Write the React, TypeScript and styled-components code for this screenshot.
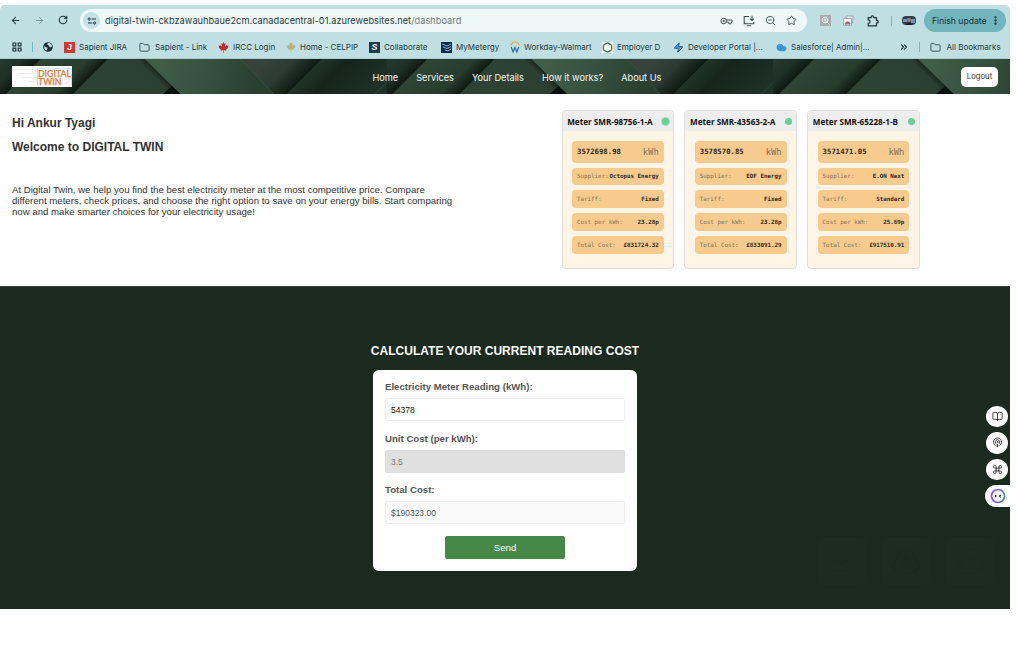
import React from 'react';
import styled, { createGlobalStyle } from 'styled-components';
import {
  ArrowLeft, ArrowRight, RotateCw, ZoomOut, Star, EllipsisVertical,
  ChevronsRight, Folder, BookOpen, Podcast, Command, Zap, Hexagon, Cloud,
} from 'lucide-react';
import { FaCanadianMapleLeaf } from 'react-icons/fa';

const ui = `Inter, 'Liberation Sans', sans-serif`;
const arial = `'Liberation Sans', Arial, sans-serif`;

const GlobalStyle = createGlobalStyle`
  * { box-sizing: border-box; }
  body { margin: 0; background: #fff; font-family: ${arial}; overflow: hidden; }
  svg { display: block; flex: none; overflow: visible; }
`;

const Page = styled.div`
  position: relative;
  width: 1010px;
  padding-top: 5px;
`;

/* ---------- browser chrome ---------- */
const Chrome = styled.header`
  height: 54px;
  background: #bfdfe3;
  border-bottom: 1px solid #a9cdd2;
  border-radius: 5px 5px 0 0;
  font-family: ${ui};
  color: #23393d;
`;
const Toolbar = styled.div`
  display: flex;
  align-items: center;
  height: 31px;
  padding: 0 4px 0 9px;
`;
const NavButtons = styled.div`
  display: flex;
  gap: 13px;
  width: 71px;
  padding-left: 0.7px;
`;
const AddressBar = styled.div`
  display: flex;
  align-items: center;
  width: 727px;
  height: 23px;
  padding: 0 10px 0 3px;
  border-radius: 12px;
  background: #eff8f8;
`;
const SiteBadge = styled.span`
  display: grid;
  place-items: center;
  width: 17px;
  height: 17px;
  margin-right: 5px;
  border-radius: 50%;
  background: #c4e1e5;
`;
const Url = styled.span`
  flex: 1;
  font-size: 9.2px;
  letter-spacing: 0.05px;
  white-space: nowrap;
  color: #26383b;
  span { color: #6a7d80; }
`;
const AddressIcons = styled.div`
  display: flex;
  align-items: center;
  gap: 10px;
  color: #3f5154;
`;
const Extensions = styled.div`
  display: flex;
  align-items: center;
  gap: 12.5px;
  width: 117px;
  padding-left: 12.5px;
`;
const Divider = styled.i<{ $gap?: string }>`
  width: 1px;
  height: 10px;
  margin: ${p => p.$gap || '0'};
  background: #6dbac4;
`;
const UpdateButton = styled.div`
  display: flex;
  align-items: center;
  justify-content: space-between;
  width: 82px;
  height: 23px;
  padding: 0 5px 0 8px;
  border-radius: 12px;
  background: #73b5bd;
  font-size: 8.6px;
  white-space: nowrap;
  color: #173034;
`;
const Bookmarks = styled.div`
  display: flex;
  align-items: center;
  height: 22px;
  padding-left: 12px;
  font-size: 8px;
`;
const Bookmark = styled.div<{ $width: number; $gap?: number }>`
  display: flex;
  align-items: center;
  gap: ${p => p.$gap ?? 4}px;
  width: ${p => p.$width}px;
  white-space: nowrap;
`;
const Favicon = styled.span<{ $bg: string }>`
  display: grid;
  place-items: center;
  width: 11px;
  height: 11px;
  background: ${p => p.$bg};
  color: #fff;
  font: bold 9px/11px ${arial};
`;

/* ---------- site navigation ---------- */
const SiteNav = styled.nav`
  display: grid;
  grid-template: 35px / 1fr;
  background: #26382c;
  > * { grid-area: 1 / 1; }
`;
const Backdrop = styled.svg`
  clip-path: inset(0);
`;
const NavContent = styled.div`
  z-index: 1;
  display: grid;
  grid-template-columns: 60px 1fr 37px;
  align-items: center;
  padding: 0 12px;
`;
const Links = styled.div`
  display: flex;
  justify-content: space-between;
  width: 289px;
  margin-left: 300.4px;
  padding-top: 1px;
  font: 9.2px ${ui};
  white-space: nowrap;
  color: #f5f7f5;
`;
const Logout = styled.button`
  height: 20px;
  padding: 0;
  border: 0;
  border-radius: 5px;
  background: #fff;
  color: #333;
  font: 7.7px ${ui};
`;

/* ---------- welcome ---------- */
const Welcome = styled.section`
  display: flex;
  justify-content: space-between;
  height: 192px;
  padding: 16px 90px 0 12px;
`;
const Intro = styled.div`
  width: 450px;
  color: #333;
`;
const Greeting = styled.h2`
  margin: 0;
  padding-top: 5px;
  font-size: 12px;
  line-height: 16px;
  & + & { padding-top: 8px; }
`;
const Lead = styled.p`
  margin: 29px 0 0;
  font-size: 9.63px;
  line-height: 11.2px;
  white-space: nowrap;
`;
const Meters = styled.div`
  display: flex;
  gap: 10px;
`;
const MeterCard = styled.article`
  width: 112.8px;
  height: 159px;
  border: 1px solid #e2e0dd;
  border-radius: 4px;
  overflow: hidden;
  background: #fef5e7;
`;
const MeterHead = styled.div`
  display: flex;
  align-items: center;
  justify-content: space-between;
  height: 20px;
  padding: 0 4px 0 4.6px;
  background: #eeeeef;
  font: bold 8.15px 'Noto Sans', sans-serif;
  white-space: nowrap;
  color: #111;
`;
const Status = styled.i<{ $halo?: boolean }>`
  width: 7px;
  height: 7px;
  border-radius: 50%;
  background: #68cf9b;
  box-shadow: ${p => (p.$halo ? '0 0 0 1px #a4dfc1' : 'none')};
`;
const MeterBody = styled.div`
  display: flex;
  flex-direction: column;
  gap: 5px;
  padding: 10px 9.7px 0 9.4px;
`;
const MeterRow = styled.div<{ $big?: boolean }>`
  display: flex;
  align-items: center;
  justify-content: space-between;
  height: ${p => (p.$big ? 21.5 : 17.8)}px;
  padding: 0 5px;
  border-radius: 4px;
  background: #f6cb8d;
  font-family: 'DejaVu Sans Mono', monospace;
  font-size: ${p => (p.$big ? 7.3 : 5.85)}px;
  white-space: nowrap;
  color: #817259;
  b { color: #30281b; }
`;
const Unit = styled.span`
  font-size: 8.8px;
`;

/* ---------- calculator ---------- */
const Calculator = styled.main`
  display: flex;
  flex-direction: column;
  align-items: center;
  height: 323px;
  padding-top: 57px;
  border-top: 1px solid #35443a;
  background: #1b2a1e;
`;
const Title = styled.h1`
  margin: 0 0 11px;
  font-size: 12px;
  line-height: 15px;
  letter-spacing: 0.02px;
  white-space: nowrap;
  color: #fff;
`;
const Form = styled.form`
  display: flex;
  flex-direction: column;
  width: 264px;
  height: 201px;
  padding: 11px 12px;
  border-radius: 6px;
  background: #fff;
`;
const Label = styled.label`
  margin-bottom: 5px;
  font-size: 9.65px;
  font-weight: bold;
  line-height: 12px;
  color: #555;
`;
const Field = styled.div<{ $bg: string; $border: string; $color: string }>`
  height: 23px;
  margin-bottom: 11.5px;
  padding: 0 5px;
  border: 1px solid ${p => p.$border};
  border-radius: 2px;
  background: ${p => p.$bg};
  color: ${p => p.$color};
  font-size: 8.5px;
  line-height: 22px;
`;
const Send = styled.button`
  align-self: center;
  width: 120px;
  height: 23px;
  padding: 0;
  border: 0;
  border-radius: 2px;
  background: #468847;
  color: #fff;
  font: 9.7px ${arial};
`;

/* ---------- floating overlays ---------- */
const SideDock = styled.div`
  position: absolute;
  right: 0;
  top: 405.5px;
  display: flex;
  flex-direction: column;
  align-items: flex-end;
  gap: 5px;
`;
const DockButton = styled.div<{ $tab?: boolean }>`
  display: grid;
  place-items: center;
  width: ${p => (p.$tab ? 25 : 22)}px;
  height: ${p => (p.$tab ? 22 : 21.5)}px;
  margin-right: ${p => (p.$tab ? 0 : 2)}px;
  border-radius: ${p => (p.$tab ? '11px 0 0 11px' : '50%')};
  background: #fff;
  color: #333;
`;
const Ghosts = styled.div`
  position: absolute;
  top: 537px;
  left: 818px;
  display: flex;
  gap: 16px;
`;
const Ghost = styled.div`
  display: grid;
  place-items: center;
  width: 48px;
  height: 48px;
  border-radius: 6px;
  background: #1d2c20;
  color: #1c2b1f;
`;

const TILE = 386.6;

function NavBackdrop() {
  return (
    <Backdrop width="1010" height="35">
      <defs>
        <linearGradient id="band" gradientUnits="userSpaceOnUse" x1="20.5" y1="20.5" x2="54" y2="54">
          <stop offset="0" stopColor="#2f4435" /><stop offset=".7" stopColor="#293d2e" /><stop offset="1" stopColor="#0d1a11" />
        </linearGradient>
        <linearGradient id="wedge" gradientUnits="userSpaceOnUse" x1="95" y1="20" x2="130" y2="-15">
          <stop offset="0" stopColor="#2d4232" /><stop offset=".88" stopColor="#2b4030" /><stop offset="1" stopColor="#18281c" />
        </linearGradient>
        <linearGradient id="panel" gradientUnits="userSpaceOnUse" x1="160" y1="5" x2="255" y2="30">
          <stop offset="0" stopColor="#405d48" /><stop offset=".6" stopColor="#344e3b" /><stop offset="1" stopColor="#293f2f" />
        </linearGradient>
        <linearGradient id="fold" gradientUnits="userSpaceOnUse" x1="135" y1="135" x2="161" y2="161">
          <stop offset="0" stopColor="#35433b" /><stop offset=".5" stopColor="#2b3b31" /><stop offset="1" stopColor="#0d1a11" />
        </linearGradient>
        <linearGradient id="night" gradientUnits="userSpaceOnUse" x1="161" y1="161" x2="205" y2="205">
          <stop offset="0" stopColor="#213427" /><stop offset=".3" stopColor="#15251a" /><stop offset="1" stopColor="#1f3228" />
        </linearGradient>
        <linearGradient id="dusk" gradientUnits="userSpaceOnUse" x1="2" y1="2" x2="20.5" y2="20.5">
          <stop offset="0" stopColor="#25382e" /><stop offset=".5" stopColor="#203228" /><stop offset="1" stopColor="#0d1a11" />
        </linearGradient>
        <g id="tile">
          <path d="M0 0H41L6 35H0Z" fill="url(#dusk)" />
          <path d="M41 0H108L73 35H6Z" fill="url(#band)" />
          <path d="M108 0H145L180 35H73Z" fill="url(#wedge)" />
          <path d="M172 27L163 35H181Z" fill="#08120c" />
          <path d="M145 0H240L274 35H181Z" fill="url(#panel)" />
          <path d="M240 0H322L287 35H274Z" fill="url(#fold)" />
          <path d="M322 0H387V35H287Z" fill="url(#night)" />
          <path d="M145 0L181 35M240 0L274 35M387 23L375 35" stroke="#587060" strokeWidth=".5" opacity=".6" fill="none" />
        </g>
      </defs>
      {[0, 1, 2].map(i => <use key={i} href="#tile" x={i * TILE} />)}
    </Backdrop>
  );
}

function Logo() {
  return (
    <svg width="60" height="21" viewBox="0 0 60 21">
      <rect width="60" height="21" fill="#fff" />
      <path d="M1 3.5H19Q25 3.5 25 8M5 7.5H25M10 11.5H25M16 15.5H25M25 18H54L59 11" stroke="#ececee" strokeWidth="1.2" fill="none" />
      <path d="M25.5 20V2.5H59.5V20" stroke="#b9c9e3" strokeWidth=".6" fill="none" />
      <g fill="#dc8148" stroke="#dc8148" strokeWidth=".25" fontFamily="Lato, sans-serif" fontWeight="600" fontSize="9.6">
        <text x="26" y="10.6" textLength="33" lengthAdjust="spacingAndGlyphs">DIGITAL</text>
        <text x="26" y="18.5" textLength="23.5" lengthAdjust="spacingAndGlyphs">TWIN</text>
      </g>
    </svg>
  );
}

const TuneIcon = () => (
  <svg width="10" height="10" viewBox="0 0 10 10" fill="none" stroke="#23393d" strokeWidth="1">
    <circle cx="2.2" cy="3" r="1.1" /><path d="M4.5 3H9M1 7H5.3" /><circle cx="7.6" cy="7" r="1.1" />
  </svg>
);
const KeyIcon = () => (
  <svg width="13" height="10" viewBox="0 0 13 10" fill="none" stroke="currentColor" strokeWidth="1">
    <circle cx="3.7" cy="5" r="2.8" /><circle cx="3.7" cy="5" r=".7" fill="currentColor" /><path d="M6.3 4H12V6.3H11V7.8H8.8V6.2H6.3" />
  </svg>
);
const InstallIcon = () => (
  <svg width="12" height="12" viewBox="0 0 12 12" fill="none" stroke="currentColor" strokeWidth="1.1">
    <path d="M6 1.5H1.2V8.8H10.8V7M3.8 10.7H8.2M9 .8V5.2M7 3.6L9 5.5L11 3.6" />
  </svg>
);
const AppsIcon = () => (
  <svg width="10" height="10" viewBox="0 0 10 10" fill="none" stroke="#23393d" strokeWidth="1.2">
    <path d="M1 1H3.8V3.8H1ZM6.2 1H9V3.8H6.2ZM1 6.2H3.8V9H1ZM6.2 6.2H9V9H6.2Z" />
  </svg>
);
const GlobeIcon = () => (
  <svg width="10" height="10" viewBox="0 0 10 10">
    <circle cx="5" cy="5" r="4.8" fill="#1f2f33" />
    <path d="M1 4L3 5.2L4.5 5.4L4.3 7L3.2 8.7Q1 7.5 1 4M5 1L4 2.4L6 3.5L5.7 4.6L8 5.5L9 4Q8.6 1.7 6.6 1" fill="#bfdfe3" />
  </svg>
);
const LensBox = () => (
  <svg width="11" height="11" viewBox="0 0 11 11" fill="none" stroke="#f4f4f4" strokeWidth="1">
    <rect width="11" height="11" fill="#a9adae" stroke="none" /><circle cx="5" cy="5" r="2.8" /><path d="M7 7L9.5 9.5M3.7 5H6.3M5 3.7V6.3" />
  </svg>
);
const CardsIcon = () => (
  <svg width="11" height="11" viewBox="0 0 11 11">
    <path d="M3 1H10.4L9.6 8H3Z" fill="#e8eeee" stroke="#889598" strokeWidth=".8" />
    <path d="M.6 3.5H8.5V10.3H.6Z" fill="#f8fafa" stroke="#889598" strokeWidth=".8" />
    <path d="M2.4 9.4A2.2 2.2 0 0 1 6.8 9.4" fill="#4a86e8" stroke="#db5145" strokeWidth="1.2" />
  </svg>
);
const PuzzleIcon = () => (
  <svg width="12" height="12" viewBox="0 0 12 12" fill="none" stroke="#1f3235" strokeWidth="1.2">
    <path d="M1.2 2.6H4Q4 .9 5.4 .9T6.8 2.6H9.5V5.3Q11.3 5.3 11.3 6.7T9.5 8.1V10.8H1.2V8.5Q3.1 8.2 3.1 6.7T1.2 4.9Z" />
  </svg>
);
const Avatar = styled.svg`
  margin-left: -2.5px;
`;
const AvatarIcon = () => (
  <Avatar width="14" height="11" viewBox="0 0 14 11">
    <rect y="1" width="14" height="9" rx="4" fill="#36404d" /><path d="M1 4H5V7H1M9 4H13V8H9" fill="#7392b8" />
    <circle cx="7" cy="5" r="2" fill="#a28370" /><path d="M4 10Q7 5.5 10 10" fill="#17191d" />
  </Avatar>
);
const MetergyIcon = () => (
  <svg width="11" height="11" viewBox="0 0 11 11">
    <rect width="11" height="11" fill="#102c4d" />
    <path d="M1 2L6 4L10 2M2 5L6 6.5L10 4.5M4 8L7 9L10 7" stroke="#8fc0dd" strokeWidth=".9" fill="none" />
  </svg>
);
const WorkdayIcon = () => (
  <svg width="10" height="12" viewBox="0 0 10 12" fill="none">
    <path d="M1 4.6A4 3.6 0 0 1 9 4.6" stroke="#e9a33b" strokeWidth="1.2" />
    <path d="M1.2 6L3.1 11L5 6.5L6.9 11L8.8 6" stroke="#2468b2" strokeWidth="1.2" />
  </svg>
);
const BotIcon = () => (
  <svg width="16" height="16" viewBox="0 0 16 16">
    <defs><linearGradient id="bot" x1="0" y1="0" x2="1" y2="0"><stop stopColor="#8a4bea" /><stop offset="1" stopColor="#3e8df5" /></linearGradient></defs>
    <circle cx="8" cy="8" r="6.5" fill="#fff" stroke="url(#bot)" strokeWidth="1.7" />
    <path d="M5.7 7V9.3M10.8 6.9L9.5 8.1L10.8 9.3" stroke="#161a2a" strokeWidth="1.2" fill="none" />
  </svg>
);

/* Barely visible shortcut drawings on the dark background */
const ghostPaths = [
  'M16 4V19M10 14L16 20L22 14M5 26H27',
  'M10 5H22L29 22L24 28H8L3 22ZM16 11L22 21H10Z',
  'M8 4H28V24H8ZM4 8V28H24M18 9V19M13 14H23',
];

const meters = [
  { name: 'SMR-98756-1-A', reading: '3572698.98', supplier: 'Octopus Energy', tariff: 'Fixed', unit: '23.28p', total: '£831724.32' },
  { name: 'SMR-43563-2-A', reading: '3578570.85', supplier: 'EDF Energy', tariff: 'Fixed', unit: '23.28p', total: '£833091.29' },
  { name: 'SMR-65228-1-B', reading: '3571471.05', supplier: 'E.ON Next', tariff: 'Standard', unit: '25.69p', total: '£917510.91' },
];

export default function App() {
  return (
    <Page>
      <GlobalStyle />
      <Chrome>
        <Toolbar>
          <NavButtons>
            <ArrowLeft size={11} strokeWidth={2.3} />
            <ArrowRight size={11} strokeWidth={2} color="#779397" />
            <RotateCw size={10} strokeWidth={2.8} />
          </NavButtons>
          <AddressBar>
            <SiteBadge><TuneIcon /></SiteBadge>
            <Url>digital-twin-ckbzawauhbaue2cm.canadacentral-01.azurewebsites.net<span>/dashboard</span></Url>
            <AddressIcons>
              <KeyIcon />
              <InstallIcon />
              <ZoomOut size={11} />
              <Star size={11} />
            </AddressIcons>
          </AddressBar>
          <Extensions>
            <LensBox /><CardsIcon /><PuzzleIcon /><Divider /><AvatarIcon />
          </Extensions>
          <UpdateButton>Finish update <EllipsisVertical size={11} strokeWidth={3} /></UpdateButton>
        </Toolbar>
        <Bookmarks>
          <AppsIcon />
          <Divider $gap="0 10px" />
          <Bookmark $width={21}><GlobeIcon /></Bookmark>
          <Bookmark $width={75}><Favicon $bg="#d23935">J</Favicon>Sapient JIRA</Bookmark>
          <Bookmark $width={79} $gap={5}><Folder size={11} strokeWidth={1.8} />Sapient - Link</Bookmark>
          <Bookmark $width={68}><FaCanadianMapleLeaf size={11} color="#c9282d" />IRCC Login</Bookmark>
          <Bookmark $width={83}><FaCanadianMapleLeaf size={10} color="#b7b27b" />Home - CELPIP</Bookmark>
          <Bookmark $width={72}><Favicon $bg="#183a49"><i>S</i></Favicon>Collaborate</Bookmark>
          <Bookmark $width={69}><MetergyIcon />MyMetergy</Bookmark>
          <Bookmark $width={92}><WorkdayIcon />Workday-Walmart</Bookmark>
          <Bookmark $width={71}><Favicon $bg="#fff"><Hexagon size={11} color="#388250" strokeWidth={3} /></Favicon>Employer D</Bookmark>
          <Bookmark $width={103}><Zap size={11} color="#1d4f91" fill="#4898e8" />Developer Portal |...</Bookmark>
          <Bookmark $width={123}><Cloud size={11} color="#3a96dc" fill="#3a96dc" />Salesforce| Admin|...</Bookmark>
          <ChevronsRight size={10} strokeWidth={2.6} />
          <Divider $gap="0 10px 0 10px" />
          <Bookmark $width={70} $gap={5.5}><Folder size={11} strokeWidth={1.8} />All Bookmarks</Bookmark>
        </Bookmarks>
      </Chrome>

      <SiteNav>
        <NavBackdrop />
        <NavContent>
          <Logo />
          <Links>
            <span>Home</span><span>Services</span><span>Your Details</span><span>How it works?</span><span>About Us</span>
          </Links>
          <Logout>Logout</Logout>
        </NavContent>
      </SiteNav>

      <Welcome>
        <Intro>
          <Greeting>Hi Ankur Tyagi</Greeting>
          <Greeting>Welcome to DIGITAL TWIN</Greeting>
          <Lead>
            At Digital Twin, we help you find the best electricity meter at the most competitive price. Compare<br />
            different meters, check prices, and choose the right option to save on your energy bills. Start comparing<br />
            now and make smarter choices for your electricity usage!
          </Lead>
        </Intro>
        <Meters>
          {meters.map((m, i) => (
            <MeterCard key={m.name}>
              <MeterHead>Meter {m.name}<Status $halo={i === 0} /></MeterHead>
              <MeterBody>
                <MeterRow $big><b>{m.reading}</b><Unit>kWh</Unit></MeterRow>
                <MeterRow>Supplier:<b>{m.supplier}</b></MeterRow>
                <MeterRow>Tariff:<b>{m.tariff}</b></MeterRow>
                <MeterRow>Cost per kWh:<b>{m.unit}</b></MeterRow>
                <MeterRow>Total Cost:<b>{m.total}</b></MeterRow>
              </MeterBody>
            </MeterCard>
          ))}
        </Meters>
      </Welcome>

      <Calculator>
        <Title>CALCULATE YOUR CURRENT READING COST</Title>
        <Form>
          <Label>Electricity Meter Reading (kWh):</Label>
          <Field $bg="#fff" $border="#f0f0f0" $color="#111">54378</Field>
          <Label>Unit Cost (per kWh):</Label>
          <Field $bg="#e0e0e0" $border="#dedede" $color="#777">3.5</Field>
          <Label>Total Cost:</Label>
          <Field $bg="#fafafa" $border="#efefef" $color="#555">$190323.00</Field>
          <Send type="button">Send</Send>
        </Form>
      </Calculator>

      <Ghosts>
        {ghostPaths.map(d => (
          <Ghost key={d}>
            <svg width="32" height="32" viewBox="0 0 32 32" fill="none" stroke="currentColor" strokeWidth="2"><path d={d} /></svg>
          </Ghost>
        ))}
      </Ghosts>
      <SideDock>
        <DockButton><BookOpen size={11} /></DockButton>
        <DockButton><Podcast size={11} /></DockButton>
        <DockButton><Command size={11} /></DockButton>
        <DockButton $tab><BotIcon /></DockButton>
      </SideDock>
    </Page>
  );
}
